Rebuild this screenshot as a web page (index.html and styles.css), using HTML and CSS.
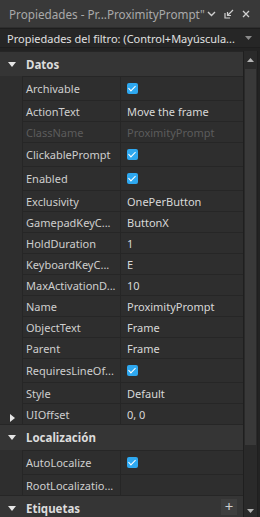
FILE: index.html
```html
<!DOCTYPE html>
<html lang="es">
<head>
  <meta charset="UTF-8" />
  <title>Propiedades</title>
  <link rel="stylesheet" href="styles.css">
</head>
<body>
<div class="window">
  <div class="titlebar">
    <span class="title">Propiedades - Pr...ProximityPrompt"</span>
    <span class="tools">
      <svg width="9" height="6" viewBox="0 0 9 6" fill="none" stroke="#cfcfcf" stroke-width="1.4"><path d="M1 1l3.5 3.5L8 1"/></svg>
      <svg width="10" height="10" viewBox="0 0 10 10" fill="none" stroke="#cfcfcf" stroke-width="1.2"><path d="M1 4v5h5"/><path d="M3.5 6.5L9 1M3.5 3v3.5H7"/></svg>
      <svg width="8" height="8" viewBox="0 0 8 8" fill="none" stroke="#cfcfcf" stroke-width="1.3"><path d="M1 1l6 6M7 1L1 7"/></svg>
    </span>
  </div>
  <div class="filter">
    <span>Propiedades del filtro: (Control+Mayúscula...</span>
    <svg width="7" height="4" viewBox="0 0 7 4"><path d="M0 0h7L3.5 4z" fill="#8a8a8a"/></svg>
  </div>
  <div class="body">
    <div class="list">
      <div class="group"><span class="tri down"></span>Datos</div>
      <div class="row tall"><span class="name">Archivable</span><span class="value"><span class="check"></span></span></div>
      <div class="row"><span class="name">ActionText</span><span class="value">Move the frame</span></div>
      <div class="row muted"><span class="name">ClassName</span><span class="value">ProximityPrompt</span></div>
      <div class="row tall"><span class="name">ClickablePrompt</span><span class="value"><span class="check"></span></span></div>
      <div class="row tall"><span class="name">Enabled</span><span class="value"><span class="check"></span></span></div>
      <div class="row"><span class="name">Exclusivity</span><span class="value">OnePerButton</span></div>
      <div class="row"><span class="name">GamepadKeyC...</span><span class="value">ButtonX</span></div>
      <div class="row"><span class="name">HoldDuration</span><span class="value">1</span></div>
      <div class="row"><span class="name">KeyboardKeyC...</span><span class="value">E</span></div>
      <div class="row"><span class="name">MaxActivationD...</span><span class="value">10</span></div>
      <div class="row"><span class="name">Name</span><span class="value">ProximityPrompt</span></div>
      <div class="row"><span class="name">ObjectText</span><span class="value">Frame</span></div>
      <div class="row"><span class="name">Parent</span><span class="value">Frame</span></div>
      <div class="row tall"><span class="name">RequiresLineOf...</span><span class="value"><span class="check"></span></span></div>
      <div class="row"><span class="name">Style</span><span class="value">Default</span></div>
      <div class="row"><span class="expand"><span class="tri right"></span></span><span class="name">UIOffset</span><span class="value">0, 0</span></div>
      <div class="group big"><span class="tri down"></span>Localización</div>
      <div class="row tall"><span class="name">AutoLocalize</span><span class="value"><span class="check"></span></span></div>
      <div class="row"><span class="name">RootLocalizatio...</span><span class="value"></span></div>
      <div class="group"><span class="tri down"></span>Etiquetas<span class="add">+</span></div>
    </div>
    <div class="scrollbar">
      <div class="arrow"><svg width="7" height="4" viewBox="0 0 7 4"><path d="M0 4h7L3.5 0z" fill="#b5b5b5"/></svg></div>
      <div class="track"><div class="thumb"></div></div>
      <div class="arrow"><svg width="7" height="4" viewBox="0 0 7 4"><path d="M0 0h7L3.5 4z" fill="#b5b5b5"/></svg></div>
    </div>
  </div>
</div>
</body>
</html>
```

FILE: styles.css
```css
body {
  margin: 0;
  background: #2e2e2e;
  font-family: "Noto Sans", "Open Sans", sans-serif;
  font-size: 11px;
  color: #d2d2d2;
}

.window {
  width: 260px;
  height: 517px;
  display: flex;
  flex-direction: column;
  overflow: hidden;
}

.titlebar {
  height: 27px;
  background: #393939;
  display: flex;
  align-items: center;
  padding: 0 10px 0 9px;
  flex-shrink: 0;
}

.title {
  flex: 1;
  color: #a9a9a9;
  font-size: 11.7px;
  white-space: nowrap;
}

.tools {
  display: flex;
  align-items: center;
  gap: 8px;
}

.filter {
  height: 18px;
  margin-top: 1px;
  background: #262626;
  border-top: 1px solid #1e1e1e;
  border-bottom: 1px solid #1e1e1e;
  display: flex;
  align-items: center;
  padding: 0 8px 0 7px;
  color: #e0e0e0;
  flex-shrink: 0;
}

.filter span {
  flex: 1;
  white-space: nowrap;
}

.body {
  flex: 1;
  display: flex;
  background: #232323;
  padding-top: 3px;
}

.list {
  width: 243px;
  background: #2e2e2e;
}

.group {
  height: 25px;
  background: #353535;
  border-top: 1px solid #262626;
  display: flex;
  align-items: center;
  font-weight: bold;
  font-size: 11.5px;
  color: #dcdcdc;
  box-sizing: border-box;
  position: relative;
}

.group.big {
  height: 26px;
}

.tri {
  display: inline-block;
  width: 0;
  height: 0;
  margin: 0 10px 0 8px;
}

.tri.down {
  border-left: 4px solid transparent;
  border-right: 4px solid transparent;
  border-top: 5px solid #e6e6e6;
}

.tri.right {
  border-top: 4px solid transparent;
  border-bottom: 4px solid transparent;
  border-left: 5px solid #e6e6e6;
  margin: 0;
}

.add {
  position: absolute;
  right: 6px;
  top: 3px;
  width: 16px;
  height: 16px;
  background: #3e3e3e;
  color: #cfcfcf;
  font-weight: normal;
  font-size: 15px;
  line-height: 15px;
  text-align: center;
}

.row {
  height: 21px;
  display: flex;
  border-left: 1px solid #262626;
  margin-left: 22px;
  box-sizing: border-box;
  border-top: 1px solid #262626;
  position: relative;
}

.row.tall {
  height: 24px;
}

.expand {
  position: absolute;
  left: -13px;
  top: 6px;
}

.name {
  width: 94px;
  padding-left: 3px;
  border-right: 1px solid #262626;
  display: flex;
  align-items: center;
  white-space: nowrap;
  overflow: hidden;
  color: #cfcfcf;
}

.value {
  flex: 1;
  padding-left: 6px;
  display: flex;
  align-items: center;
  color: #d8d8d8;
  white-space: nowrap;
}

.muted .name,
.muted .value {
  color: #5c5c5c;
}

.check {
  width: 11px;
  height: 11px;
  border-radius: 2px;
  background: #2ea8f0;
  position: relative;
}

.check::after {
  content: "";
  position: absolute;
  left: 3px;
  top: 1px;
  width: 3px;
  height: 6px;
  border-right: 1.5px solid #fff;
  border-bottom: 1.5px solid #fff;
  transform: rotate(45deg);
}

.scrollbar {
  width: 13px;
  display: flex;
  flex-direction: column;
  border-left: 1px solid #1f1f1f;
  border-right: 1px solid #1f1f1f;
  background: #2a2a2a;
}

.arrow {
  height: 18px;
  display: flex;
  align-items: center;
  justify-content: center;
}

.track {
  flex: 1;
  padding: 0 1px;
}

.thumb {
  height: 376px;
  background: #393939;
}
```
